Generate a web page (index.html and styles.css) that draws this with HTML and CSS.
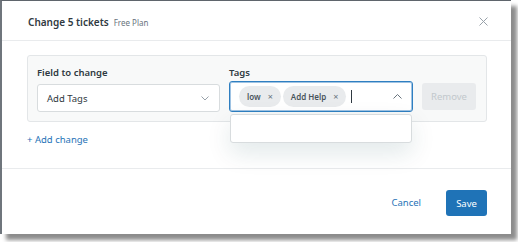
FILE: index.html
```html
<!DOCTYPE html>
<html>
<head>
<meta charset="utf-8">
<link rel="stylesheet" href="styles.css">
</head>
<body>
<div class="dialog">
  <header class="hd">
    <div class="title"><span class="t">Change 5 tickets</span><span class="plan">Free Plan</span></div>
    <button class="close" aria-label="Close">
      <svg width="9" height="9" viewBox="0 0 9 9"><path d="M0.5 0.5L8.5 8.5M8.5 0.5L0.5 8.5" stroke="#98a1a9" stroke-width="1" fill="none"/></svg>
    </button>
  </header>
  <div class="bd">
    <div class="panel">
      <div class="col field">
        <div class="lbl">Field to change</div>
        <div class="select">
          <span>Add Tags</span>
          <svg width="8" height="5" viewBox="0 0 8 5"><path d="M0.5 0.5L4 4L7.5 0.5" stroke="#98a1a9" stroke-width="1" fill="none"/></svg>
        </div>
      </div>
      <div class="col tags">
        <div class="lbl">Tags</div>
        <div class="tagrow">
          <div class="tagwrap">
            <div class="taginput">
              <span class="chip">low<span class="x">×</span></span>
              <span class="chip">Add Help<span class="x">×</span></span>
              <span class="cursor"></span>
              <svg class="up" width="9" height="5" viewBox="0 0 9 5"><path d="M0.5 4.5L4.5 0.5L8.5 4.5" stroke="#68737d" stroke-width="1" fill="none"/></svg>
            </div>
            <div class="dropdown"></div>
          </div>
          <button class="remove">Remove</button>
        </div>
      </div>
    </div>
    <a class="add">+ Add change</a>
  </div>
  <footer class="ft">
    <a class="cancel">Cancel</a>
    <button class="save">Save</button>
  </footer>
</div>
</body>
</html>
```
FILE: styles.css
```css
html, body {
  margin: 0;
  padding: 0;
  background: #ffffff;
}
body {
  width: 518px;
  height: 242px;
  overflow: hidden;
  font-family: "Noto Sans", "Open Sans", sans-serif;
  color: #2f3941;
}
.dialog {
  box-sizing: border-box;
  width: 511px;
  height: 234px;
  background: #ffffff;
  border-top: 1px solid #5f656c;
  border-left: 2px solid #6f757c;
  box-shadow: 6px 6px 4px rgba(0, 0, 0, 0.45);
  display: flex;
  flex-direction: column;
}
.hd {
  box-sizing: border-box;
  height: 40px;
  border-bottom: 1px solid #e9ebed;
  display: flex;
  align-items: center;
  justify-content: space-between;
  padding: 2px 23px 0 26px;
}
.title {
  display: flex;
  align-items: baseline;
  gap: 5px;
}
.t {
  font-size: 10px;
  font-weight: 600;
  color: #2f3941;
}
.plan {
  font-size: 8px;
  color: #68737d;
}
.close {
  border: 0;
  background: none;
  padding: 0;
  width: 9px;
  height: 9px;
  display: flex;
}
.bd {
  flex: 1;
  padding: 14px 24px 0 25px;
}
.panel {
  box-sizing: border-box;
  height: 67px;
  border: 1px solid #e3e6e8;
  border-radius: 3px;
  background: #f8f9f9;
  padding: 10px 9px 9px 9px;
  display: flex;
  align-items: flex-end;
  gap: 9px;
}
.col {
  display: flex;
  flex-direction: column;
}
.lbl {
  font-size: 9.5px;
  line-height: 13px;
  font-weight: 600;
  color: #2f3941;
}
.field .lbl { margin-bottom: 5px; }
.tags .lbl { margin-bottom: 2px; }
.select {
  box-sizing: border-box;
  width: 183px;
  height: 28px;
  background: #fff;
  border: 1px solid #d8dcde;
  border-radius: 3px;
  padding: 0 10px 0 9px;
  display: flex;
  align-items: center;
  justify-content: space-between;
  font-size: 9.5px;
  color: #2f3941;
}
.tagrow {
  display: flex;
  align-items: center;
  gap: 9px;
}
.tagwrap {
  position: relative;
}
.taginput {
  box-sizing: border-box;
  width: 184px;
  height: 31px;
  background: #fff;
  border: 1px solid #2f7fc1;
  box-shadow: inset 0 0 0 1px #9fc3e3;
  border-radius: 3px;
  padding: 0 10px 0 9px;
  display: flex;
  align-items: center;
  gap: 2px;
}
.chip {
  box-sizing: border-box;
  height: 21px;
  border-radius: 11px;
  background: #e9ebed;
  color: #49545c;
  font-size: 8px;
  font-weight: 600;
  display: inline-flex;
  align-items: center;
  padding: 0 8px 0 8px;
}
.chip .x {
  font-weight: 400;
  color: #68737d;
  font-size: 9px;
  margin-left: 7px;
}
.cursor {
  width: 1px;
  height: 13px;
  background: #2f3941;
  margin-left: 3px;
}
.up {
  margin-left: auto;
}
.dropdown {
  position: absolute;
  left: 1px;
  right: 1px;
  top: 33px;
  height: 29px;
  box-sizing: border-box;
  background: #fff;
  border: 1px solid #d8dcde;
  border-radius: 3px;
  box-shadow: 0 10px 24px rgba(4, 68, 77, 0.12);
}
.remove {
  box-sizing: border-box;
  width: 54px;
  height: 27px;
  border: 0;
  border-radius: 3px;
  background: #e9ebed;
  color: #c2c8cc;
  font-family: inherit;
  font-size: 9.5px;
  padding: 0;
}
.add {
  display: block;
  margin-top: 11px;
  font-size: 9.5px;
  line-height: 13px;
  color: #1f73b7;
}
.ft {
  box-sizing: border-box;
  height: 66px;
  border-top: 1px solid #e9ebed;
  display: flex;
  align-items: flex-start;
  justify-content: flex-end;
  padding: 21px 24px 0 0;
  gap: 25px;
}
.cancel {
  font-size: 9.5px;
  line-height: 26px;
  color: #1f73b7;
}
.save {
  box-sizing: border-box;
  width: 41px;
  height: 26px;
  border: 0;
  border-radius: 3px;
  background: #1f73b7;
  color: #fff;
  font-family: inherit;
  font-size: 9.5px;
  font-weight: 400;
  padding: 0;
}
```
